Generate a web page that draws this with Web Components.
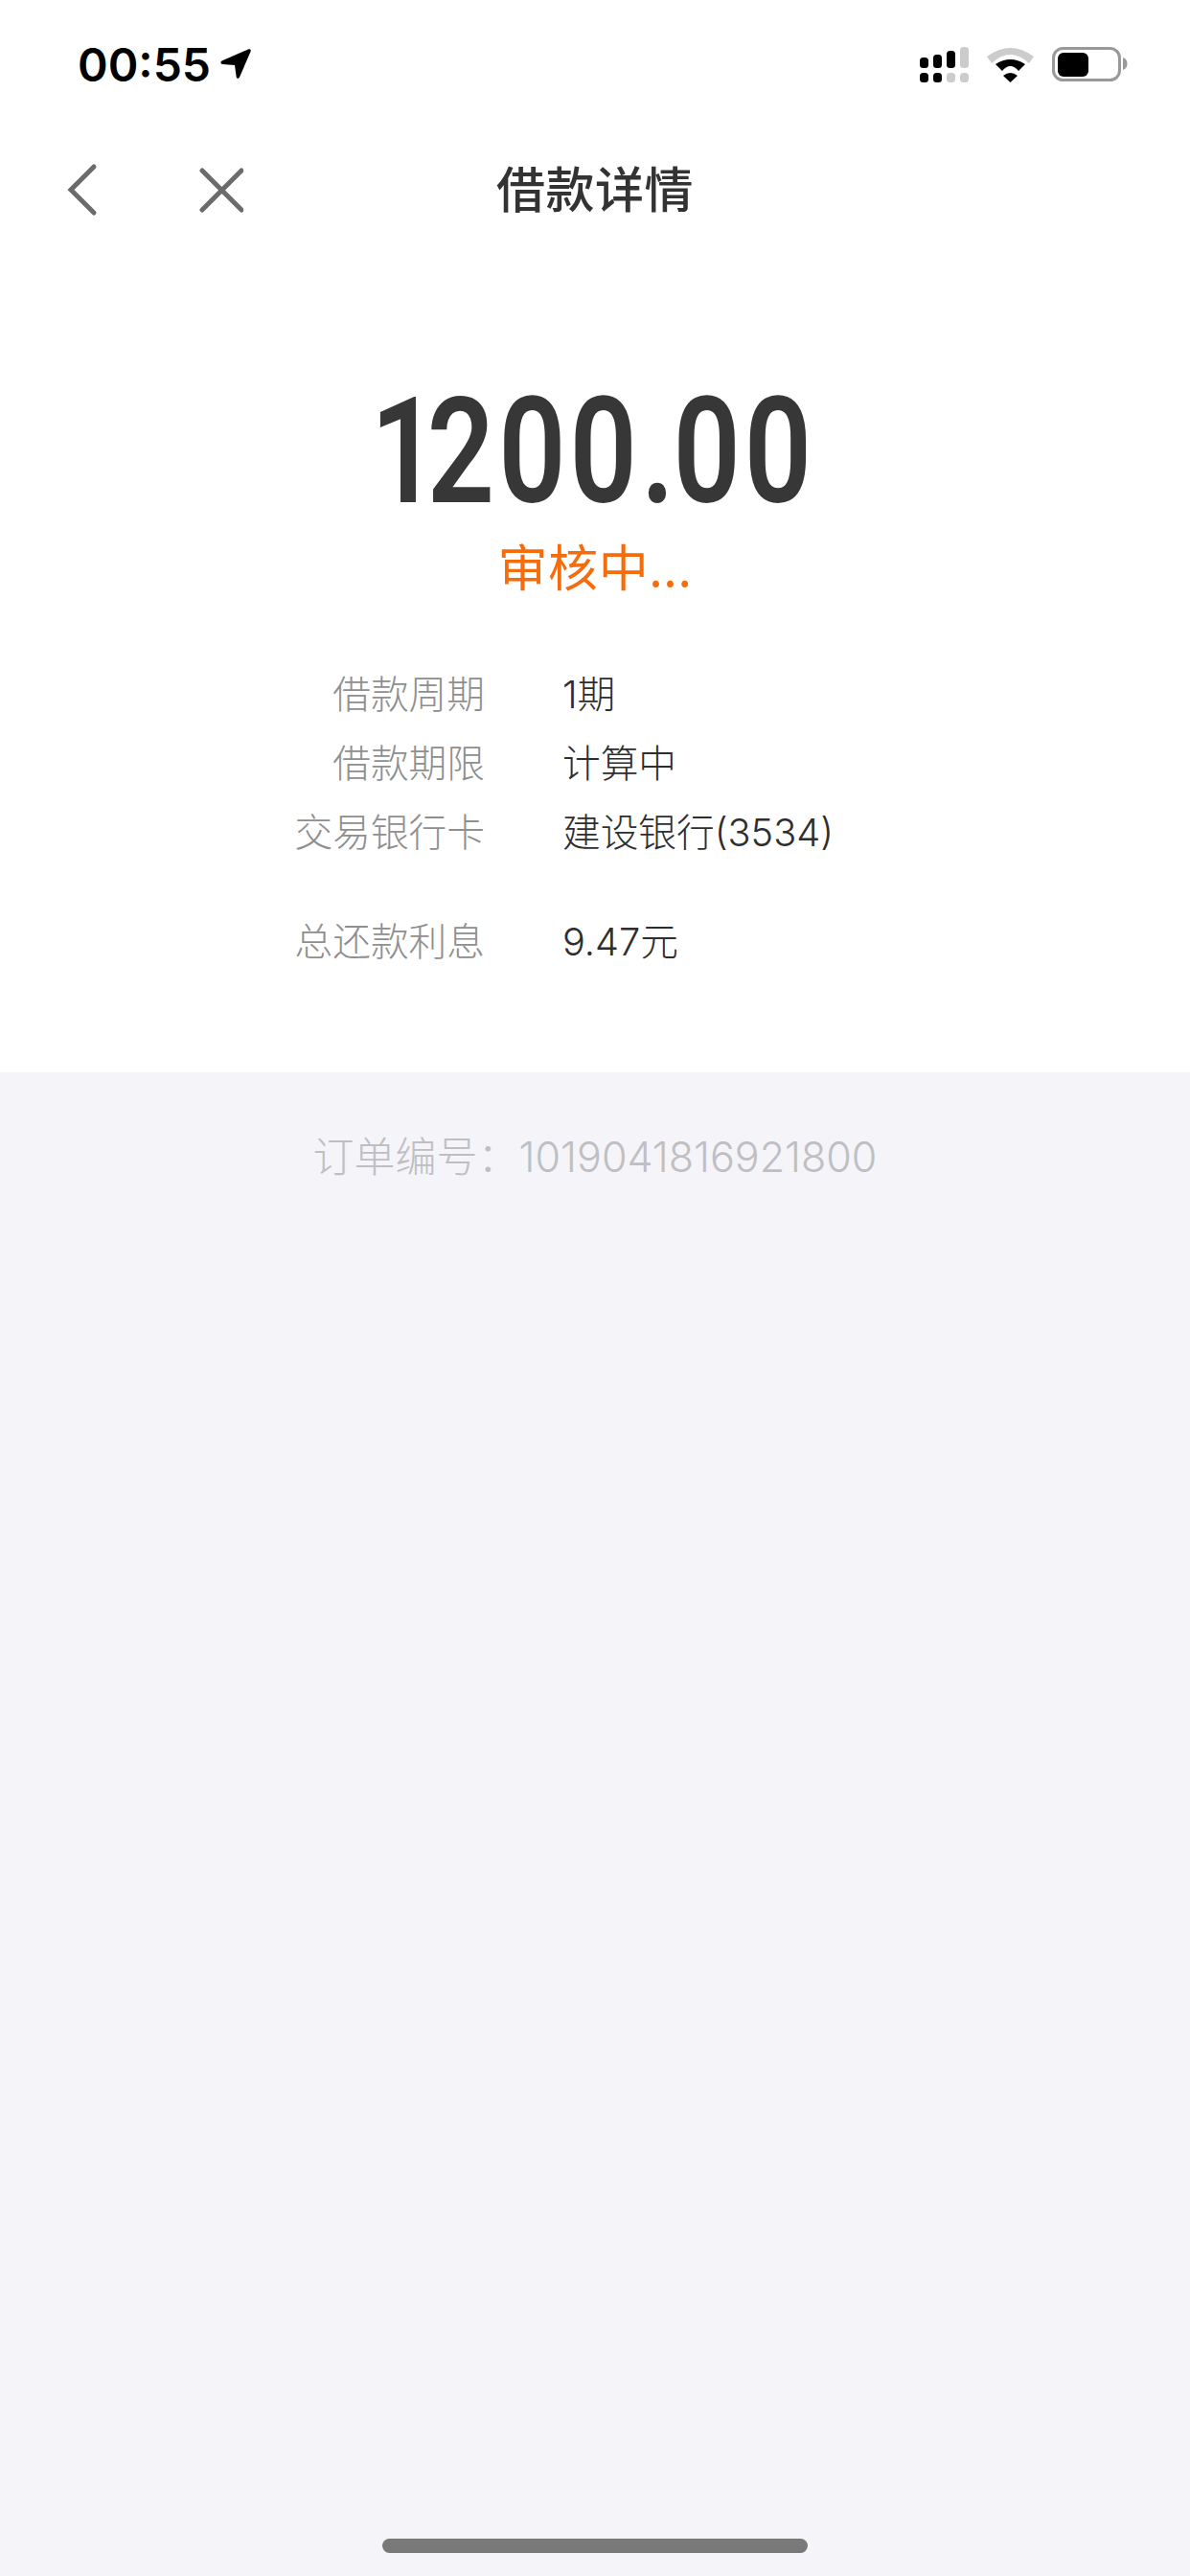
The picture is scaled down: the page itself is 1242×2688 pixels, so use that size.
<!DOCTYPE html>
<html lang="zh">
<head>
<meta charset="utf-8">
<title>借款详情</title>
<style>
  html, body { margin: 0; padding: 0; }
  body {
    width: 1242px;
    min-height: 2688px;
    display: flex;
    flex-direction: column;
    background: #f4f4f9;
    font-family: "Inter", "Noto Sans CJK SC", sans-serif;
  }
</style>
</head>
<body>
<status-bar></status-bar>
<nav-bar>借款详情</nav-bar>
<loan-summary state="审核中...">
  <detail-row label="借款周期">1期</detail-row>
  <detail-row label="借款期限">计算中</detail-row>
  <detail-row label="交易银行卡">建设银行(3534)</detail-row>
  <detail-row label="总还款利息" class="gap">9.47元</detail-row>
</loan-summary>
<order-number>订单编号：1019041816921800</order-number>
<home-bar></home-bar>

<script>
class StatusBar extends HTMLElement {
  constructor() {
    super();
    this.attachShadow({ mode: 'open' }).innerHTML = `
    <style>
      :host { display: flex; align-items: center; height: 132px; padding: 3px 65px 0 81px; background: #fff; box-sizing: border-box; }
      .time { font: 600 48px/1 "Inter", sans-serif; color: #000; }
      .arrow { margin-left: 10px; }
      .right { margin-left: auto; display: flex; align-items: center; gap: 19px; }
    </style>
    <span class="time">00:55</span>
    <svg class="arrow" width="33" height="33" viewBox="0 0 33 33"><path d="M1.500 12.500 29 .5c2-.8 3.300.5 2.600 2.300L20 29.500c-.8 1.800-3 1.600-3.300-.3L15 17 2 16C.3 15.700-.2 13.300 1.500 12.500Z" fill="#000"/></svg>
    <div class="right">
      <svg width="51" height="37" viewBox="0 0 51 37">
        <rect x="0" y="11" width="9" height="11" rx="3.500" fill="#000"/>
        <rect x="14" y="8" width="9" height="14" rx="3.500" fill="#000"/>
        <rect x="28" y="4" width="9" height="18" rx="3.500" fill="#000"/>
        <rect x="42" y="0" width="9" height="22" rx="3.500" fill="#ccc"/>
        <rect x="0" y="27" width="9" height="10" rx="3.500" fill="#000"/>
        <rect x="14" y="27" width="9" height="10" rx="3.500" fill="#000"/>
        <rect x="28" y="27" width="9" height="10" rx="3.500" fill="#ccc"/>
        <rect x="42" y="27" width="9" height="10" rx="3.500" fill="#ccc"/>
      </svg>
      <svg width="49" height="36" viewBox="0 0 49 36">
        <path d="M0 9Q24.500-9 49 9L44 16Q24.500 -2 5 16Z" fill="#ccc"/>
        <path d="M9 17Q24.500 7 40 17L33 24Q24.500 14 16 24Z" fill="#000"/>
        <path d="M17 29Q24.500 23 32 29L24.500 36Z" fill="#000"/>
      </svg>
      <svg width="79" height="37" viewBox="0 0 79 37">
        <rect x="1.500" y="1.500" width="69" height="33" rx="10" fill="none" stroke="#999" stroke-width="3"/>
        <rect x="6" y="6" width="32" height="25" rx="6" fill="#000"/>
        <path d="M74 11c3 1 4.500 3.500 4.500 6.500s-1.500 5.500-4.500 6.500Z" fill="#999"/>
      </svg>
    </div>`;
  }
}

class NavBar extends HTMLElement {
  constructor() {
    super();
    this.attachShadow({ mode: 'open' }).innerHTML = `
    <style>
      :host { display: grid; grid-template-columns: 1fr auto 1fr; align-items: center; height: 132px; background: #fff; padding-bottom: 2px; }
      .btns { display: flex; align-items: center; padding-left: 70px; gap: 104px; }
      .title { font: 500 51px/1 "Noto Sans CJK SC", sans-serif; color: #333; letter-spacing: .5px; padding-bottom: 6px; }
    </style>
    <div class="btns">
      <svg width="32" height="56" viewBox="0 0 32 56"><path d="M28 4 4 28l24 24" fill="none" stroke="#6b6b6b" stroke-width="5" stroke-linecap="round" stroke-linejoin="miter"/></svg>
      <svg width="48" height="48" viewBox="0 0 48 48"><path d="M5 4l41 41M46 4 5 45" fill="none" stroke="#6b6b6b" stroke-width="5" stroke-linecap="round"/></svg>
    </div>
    <div class="title"><slot></slot></div>
    <div></div>`;
  }
}

class LoanSummary extends HTMLElement {
  constructor() {
    super();
    const state = this.getAttribute('state');
    this.attachShadow({ mode: 'open' }).innerHTML = `
    <style>
      :host { display: block; height: 853px; background: #fff; box-sizing: border-box; padding-top: 128px; }
      .amount { text-align: center; height: 156px; line-height: 156px; color: #373737; }
      .num { display: inline-block; font: 600 154px/156px "Roboto", sans-serif; letter-spacing: 5px; transform: scaleX(.8) translateX(-3px); }
      .one { letter-spacing: -14px; }
      .dot { letter-spacing: -2px; }
      .state { margin-top: 8px; text-align: center; font: 400 52px/64px "Noto Sans CJK SC", sans-serif; letter-spacing: .6px; color: #f56c0c; }
      .rows { margin-top: 78px; display: flex; flex-direction: column; gap: 22px; }
    </style>
    <div class="amount"><span class="num"><span class="one">1</span>200<span class="dot">.</span>00</span></div>
    <div class="state">${state}</div>
    <div class="rows"><slot></slot></div>`;
  }
}

class DetailRow extends HTMLElement {
  constructor() {
    super();
    const label = this.getAttribute('label');
    this.attachShadow({ mode: 'open' }).innerHTML = `
    <style>
      :host { display: grid; grid-template-columns: 506px 1fr; column-gap: 81px; font: 300 39.700px/50px "Inter", "Noto Sans CJK SC", sans-serif; }
      :host(.gap) { margin-top: 42px; }
      .label { text-align: right; color: #8f8f8f; }
      .value { color: #2e2e2e; }
    </style>
    <div class="label">${label}</div>
    <div class="value"><slot></slot></div>`;
  }
}

class OrderNumber extends HTMLElement {
  constructor() {
    super();
    this.attachShadow({ mode: 'open' }).innerHTML = `
    <style>
      :host { display: block; padding-top: 63px; text-align: center; font: 300 43px/50px "Inter", "Noto Sans CJK SC", sans-serif; color: #bfbfc3; }
    </style>
    <slot></slot>`;
  }
}

class HomeBar extends HTMLElement {
  constructor() {
    super();
    this.attachShadow({ mode: 'open' }).innerHTML = `
    <style>
      :host { display: flex; justify-content: center; margin-top: auto; padding-bottom: 24px; }
      .bar { width: 444px; height: 15px; border-radius: 8px; background: #797979; }
    </style>
    <div class="bar"></div>`;
  }
}

customElements.define('status-bar', StatusBar);
customElements.define('nav-bar', NavBar);
customElements.define('loan-summary', LoanSummary);
customElements.define('detail-row', DetailRow);
customElements.define('order-number', OrderNumber);
customElements.define('home-bar', HomeBar);
</script>
</body>
</html>
